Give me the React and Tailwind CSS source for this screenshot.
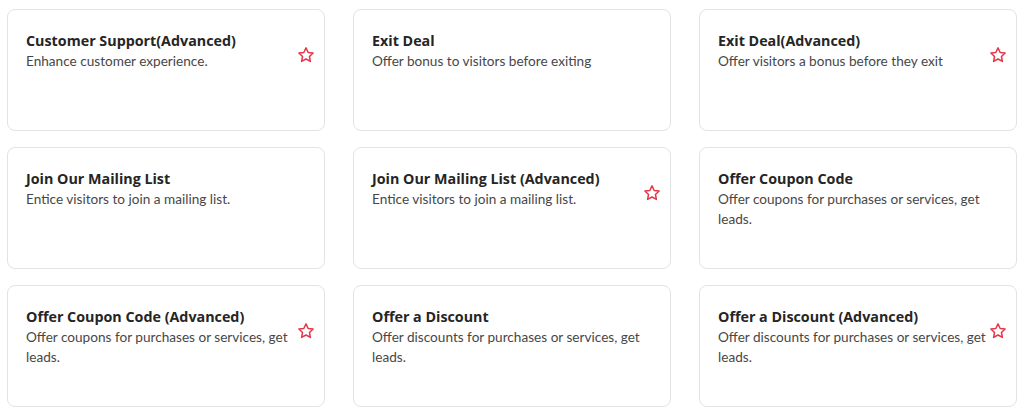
import React from "react";

const items = [
  { t: "Customer Support(Advanced)", d: "Enhance customer experience.", star: true },
  { t: "Exit Deal", d: "Offer bonus to visitors before exiting", star: false },
  { t: "Exit Deal(Advanced)", d: "Offer visitors a bonus before they exit", star: true },
  { t: "Join Our Mailing List", d: "Entice visitors to join a mailing list.", star: false },
  { t: "Join Our Mailing List (Advanced)", d: "Entice visitors to join a mailing list.", star: true },
  { t: "Offer Coupon Code", d: "Offer coupons for purchases or services, get leads.", star: false },
  { t: "Offer Coupon Code (Advanced)", d: "Offer coupons for purchases or services, get leads.", star: true },
  { t: "Offer a Discount", d: "Offer discounts for purchases or services, get leads.", star: false },
  { t: "Offer a Discount (Advanced)", d: "Offer discounts for purchases or services, get leads.", star: true },
];

function Star() {
  return (
    <svg width="18" height="18" viewBox="0 0 24 24" fill="none" stroke="#e5374a" strokeWidth="2" strokeLinejoin="round">
      <path d="M12 2.5l2.9 6.1 6.6.8-4.9 4.6 1.3 6.6L12 17.3l-5.9 3.3 1.3-6.6-4.9-4.6 6.6-.8z" />
    </svg>
  );
}

export default function App() {
  return (
    <div className="bg-white w-[1024px] h-[414px] pl-[7px] pt-[9px]">
      <div className="grid grid-cols-[318px_318px_318px] gap-x-[28px] gap-y-[16px]">
        {items.map((it) => (
          <div key={it.t} className="h-[122px] rounded-lg border border-[#e3e3e3] bg-white flex items-start pl-[18px] pr-[8px] pt-[21px]">
            <div className="flex-1 min-w-0">
              <div className="text-[14.3px] leading-[20px] font-bold text-[#252525] font-['Open_Sans',sans-serif]">{it.t}</div>
              <div className="text-[13.6px] leading-[20px] text-[#474747] font-['Lato',sans-serif]">{it.d}</div>
            </div>
            <div className="w-[20px] shrink-0 pt-[15px] flex justify-center">
              {it.star ? <Star /> : null}
            </div>
          </div>
        ))}
      </div>
    </div>
  );
}
